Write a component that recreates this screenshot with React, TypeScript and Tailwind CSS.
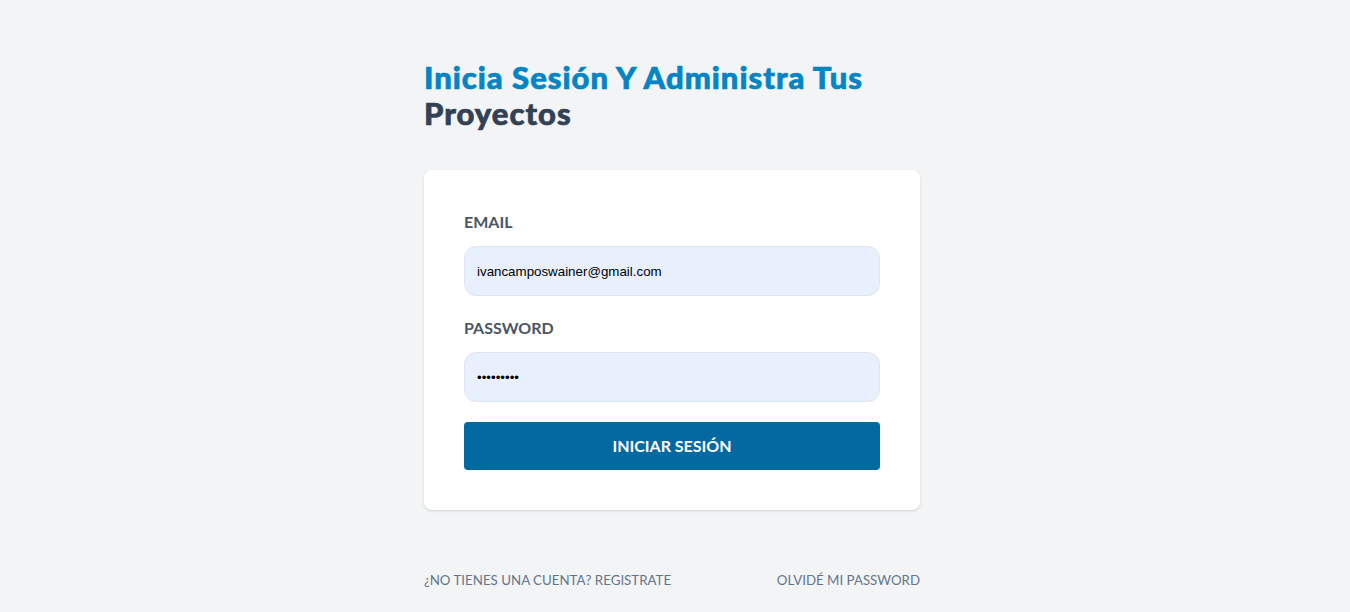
import { useState } from 'react';

export default function App() {
  const [email, setEmail] = useState('ivancamposwainer@gmail.com');
  const [password, setPassword] = useState('123456789');

  return (
    <main className="min-h-screen bg-[#f3f4f6] font-['Lato','Open_Sans',sans-serif]">
      <div className="flex justify-center pt-[59px] pr-[6px]">
        <div className="w-[496px]">
          {/* Heading */}
          <h1 className="text-[31px] leading-[36px] tracking-[1px] font-black text-[#0284c7] [-webkit-text-stroke:0.7px_currentColor]">
            Inicia Sesión Y Administra Tus <span className="text-[#334155]">Proyectos</span>
          </h1>

          {/* Login form */}
          <form
            className="mt-[39px] bg-white rounded-lg shadow-[0_1px_3px_rgba(0,0,0,0.1),0_1px_2px_rgba(0,0,0,0.06)] px-10 py-10"
            onSubmit={(e) => e.preventDefault()}
          >
            <label htmlFor="email" className="block uppercase text-[#4b5563] text-base leading-6 font-bold">
              Email
            </label>
            <input
              id="email"
              type="email"
              value={email}
              onChange={(e) => setEmail(e.target.value)}
              className="mt-3 w-full h-[50px] px-3 rounded-xl border border-[#dfe5ee] bg-[#e8f0fe] text-[13.33px] text-black font-['Liberation_Sans',Arial,sans-serif] outline-none"
            />

            <label htmlFor="password" className="mt-5 block uppercase text-[#4b5563] text-base leading-6 font-bold">
              Password
            </label>
            <input
              id="password"
              type="password"
              value={password}
              onChange={(e) => setPassword(e.target.value)}
              className="mt-3 w-full h-[50px] px-3 rounded-xl border border-[#dfe5ee] bg-[#e8f0fe] text-[13.33px] text-black font-['Liberation_Sans',Arial,sans-serif] outline-none"
            />

            <button
              type="submit"
              className="mt-5 w-full h-12 rounded bg-[#0369a1] text-white uppercase font-bold text-base"
            >
              Iniciar Sesión
            </button>
          </form>

          {/* Footer links */}
          <nav className="mt-[60px] flex justify-between text-[13.3px] leading-5 uppercase text-[#64748b]">
            <a href="#">¿No tienes una cuenta? Registrate</a>
            <a href="#">Olvidé mi Password</a>
          </nav>
        </div>
      </div>
    </main>
  );
}
